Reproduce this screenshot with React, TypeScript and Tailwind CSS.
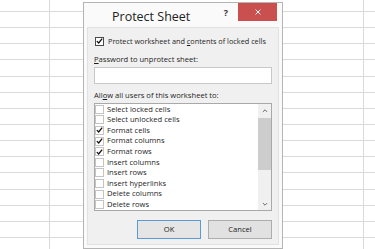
import React from "react";

const items: [string, boolean][] = [
  ["Select locked cells", false],
  ["Select unlocked cells", false],
  ["Format cells", true],
  ["Format columns", true],
  ["Format rows", true],
  ["Insert columns", false],
  ["Insert rows", false],
  ["Insert hyperlinks", false],
  ["Delete columns", false],
  ["Delete rows", false],
];

function Tick() {
  return (
    <svg viewBox="0 0 10 10" className="w-[8px] h-[8px]">
      <path d="M1.2 5.2 L3.8 7.8 L8.8 1.6" stroke="#111" strokeWidth="1.9" fill="none" />
    </svg>
  );
}

function Box({ checked, dark }: { checked: boolean; dark?: boolean }) {
  return (
    <div
      className={
        "w-[9px] h-[9px] shrink-0 flex items-center justify-center bg-white border " +
        (dark ? "border-[#4a4a4a]" : "border-[#c4c4c4]")
      }
    >
      {checked && <Tick />}
    </div>
  );
}

function Sheet() {
  const rows = Array.from({ length: 15 });
  return (
    <div className="flex flex-col">
      <div className="flex h-[12px] border-b border-[#dadada]">
        <div className="w-[50px] border-r border-[#dadada]" />
        <div className="w-[314px] border-r border-[#dadada]" />
        <div className="flex-1" />
      </div>
      {rows.map((_, i) => (
        <div key={i} className="flex h-[16.15px] border-b border-[#dadada]">
          <div className="w-[50px] border-r border-[#dadada]" />
          <div className="w-[314px] border-r border-[#dadada]" />
          <div className="flex-1" />
        </div>
      ))}
    </div>
  );
}

export default function App() {
  return (
    <div className="relative w-[375px] h-[249px] overflow-hidden bg-white font-['Open_Sans',sans-serif] text-[#1e1e1e]">
      <Sheet />

      {/* dialog window floats over the sheet */}
      <div className="absolute left-[83px] top-[2px] w-[200px] h-[247px] border border-[#b4b4b4] bg-[#fafafa] flex flex-col">
        <div className="h-[24px] flex items-start shrink-0">
          <div className="pl-[28px] pt-[6px] text-[12.5px] leading-[16px] text-[#222]">Protect Sheet</div>
          <div className="ml-auto pt-[3px] mr-[10px] text-[9px] leading-[14px] font-bold text-[#333]">?</div>
          <div className="w-[39px] h-[18px] mr-[5px] bg-[#c9504f] flex items-center justify-center">
            <svg viewBox="0 0 10 10" className="w-[6px] h-[6px]">
              <path d="M1 1 L9 9 M9 1 L1 9" stroke="#fff" strokeWidth="1.6" />
            </svg>
          </div>
        </div>

        <div className="flex-1 mx-[3px] mb-[3px] bg-[#f0f0f0] border border-[#e2e2e2] px-[6px] flex flex-col text-[7.6px] whitespace-nowrap">
          <div className="mt-[8px] h-[10px] flex items-center gap-[4px] pl-[1px]">
            <Box checked dark />
            <span className="text-[7.3px]">
              Protect worksheet and <span className="underline">c</span>ontents of locked cells
            </span>
          </div>

          <div className="mt-[9px] h-[10px] flex items-center">
            <span>
              <span className="underline">P</span>assword to unprotect sheet:
            </span>
          </div>
          <div className="mt-[2px] h-[17px] bg-white border border-[#c8c8c8]" />

          <div className="mt-[7px] h-[10px] flex items-center">
            <span>
              All<span className="underline">o</span>w all users of this worksheet to:
            </span>
          </div>

          <div className="mt-[2px] h-[108px] bg-white border border-[#a9a9a9] flex overflow-hidden">
            <div className="flex-1 flex flex-col">
              {items.map(([label, on]) => (
                <div key={label} className="h-[10.6px] shrink-0 flex items-center gap-[3px]">
                  <Box checked={on} />
                  <span>{label}</span>
                </div>
              ))}
            </div>
            <div className="w-[13px] bg-[#f0f0f0] flex flex-col">
              <div className="h-[13px] flex items-center justify-center">
                <svg viewBox="0 0 10 10" className="w-[6px] h-[6px]">
                  <path d="M1.5 6.5 L5 3 L8.5 6.5" stroke="#505050" strokeWidth="1.4" fill="none" />
                </svg>
              </div>
              <div className="mt-[1px] h-[52px] bg-[#cdcdcd]" />
              <div className="flex-1" />
              <div className="h-[13px] flex items-center justify-center">
                <svg viewBox="0 0 10 10" className="w-[6px] h-[6px]">
                  <path d="M1.5 3.5 L5 7 L8.5 3.5" stroke="#505050" strokeWidth="1.4" fill="none" />
                </svg>
              </div>
            </div>
          </div>

          <div className="mt-[9px] flex justify-end gap-[7px]">
            <button className="w-[64px] h-[19px] bg-[#e5e5e5] border border-[#5b9bd5] text-[7.6px] text-[#222]">
              OK
            </button>
            <button className="w-[64px] h-[19px] bg-[#e1e1e1] border border-[#adadad] text-[7.6px] text-[#222]">
              Cancel
            </button>
          </div>
        </div>
      </div>
    </div>
  );
}
